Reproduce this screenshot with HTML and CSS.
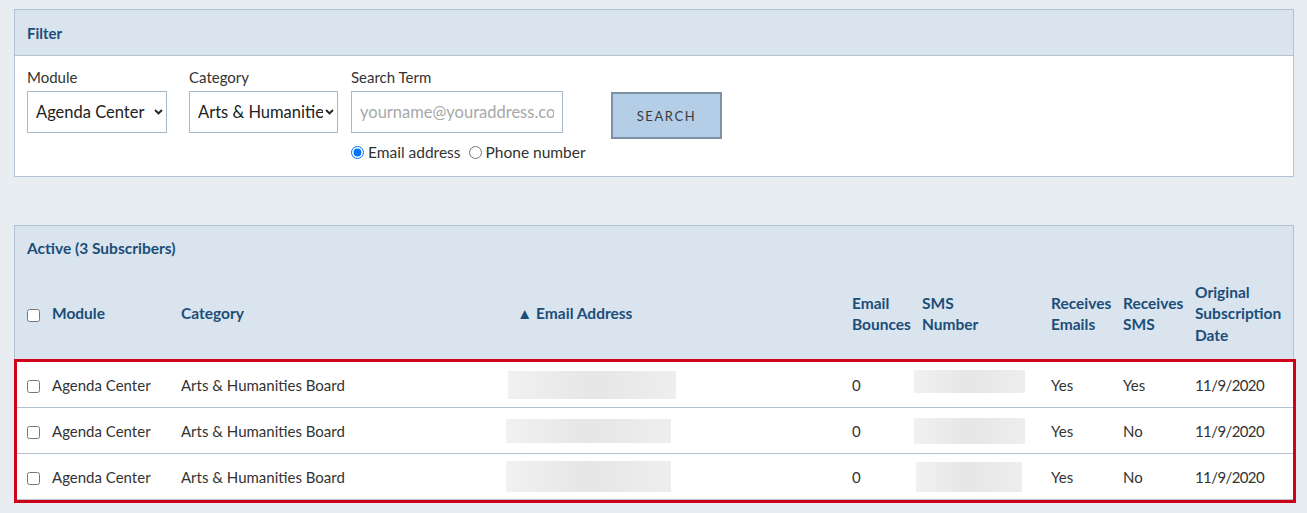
FILE: index.html
```html
<!DOCTYPE html>
<html lang="en">
<head>
<meta charset="utf-8">
<title>Subscribers</title>
<link rel="stylesheet" href="styles.css">
</head>
<body>
<section class="panel filter">
  <div class="panel-head">Filter</div>
  <div class="filter-body">
    <div class="field f-module">
      <label class="lbl">Module</label>
      <div class="select sel-module">
        <select><option>Agenda Center</option></select>
        <svg class="chev" viewBox="0 0 10 7" width="9" height="6"><path d="M1 1.2l4 4 4-4" fill="none" stroke="#222" stroke-width="2.2"/></svg>
      </div>
    </div>
    <div class="field f-cat">
      <label class="lbl">Category</label>
      <div class="select sel-cat">
        <select><option>Arts &amp; Humanities Board</option></select>
        <svg class="chev" viewBox="0 0 10 7" width="9" height="6"><path d="M1 1.2l4 4 4-4" fill="none" stroke="#222" stroke-width="2.2"/></svg>
      </div>
    </div>
    <div class="field f-term">
      <label class="lbl">Search Term</label>
      <input class="term" type="text" placeholder="yourname@youraddress.com">
      <div class="radios">
        <label class="radio"><input type="radio" name="t" checked> Email address</label>
        <label class="radio"><input type="radio" name="t"> Phone number</label>
      </div>
    </div>
    <button class="btn" type="button">SEARCH</button>
  </div>
</section>

<section class="panel active">
  <div class="active-title">Active (3 Subscribers)</div>
  <table class="subs">
    <colgroup>
      <col class="c-chk"><col class="c-mod"><col class="c-cat"><col class="c-email"><col class="c-bounce"><col class="c-sms"><col class="c-re"><col class="c-rs"><col class="c-date">
    </colgroup>
    <thead>
      <tr>
        <th class="chk"><input type="checkbox"></th>
        <th>Module</th>
        <th>Category</th>
        <th class="email-h">&#9650; Email Address</th>
        <th>Email<br>Bounces</th>
        <th>SMS<br>Number</th>
        <th>Receives<br>Emails</th>
        <th>Receives<br>SMS</th>
        <th>Original<br>Subscription<br>Date</th>
      </tr>
    </thead>
    <tbody>
      <tr class="first">
        <td class="chk"><input type="checkbox"></td>
        <td>Agenda Center</td>
        <td>Arts &amp; Humanities Board</td>
        <td><span class="blur e1"></span></td>
        <td>0</td>
        <td><span class="blur s1"></span></td>
        <td>Yes</td>
        <td>Yes</td>
        <td class="date">11/9/2020</td>
      </tr>
      <tr>
        <td class="chk"><input type="checkbox"></td>
        <td>Agenda Center</td>
        <td>Arts &amp; Humanities Board</td>
        <td><span class="blur e2"></span></td>
        <td>0</td>
        <td><span class="blur s2"></span></td>
        <td>Yes</td>
        <td>No</td>
        <td class="date">11/9/2020</td>
      </tr>
      <tr>
        <td class="chk"><input type="checkbox"></td>
        <td>Agenda Center</td>
        <td>Arts &amp; Humanities Board</td>
        <td><span class="blur e3"></span></td>
        <td>0</td>
        <td><span class="blur s3"></span></td>
        <td>Yes</td>
        <td>No</td>
        <td class="date">11/9/2020</td>
      </tr>
    </tbody>
  </table>
  <div class="highlight"></div>
</section>
</body>
</html>
```
FILE: styles.css
```css
* { box-sizing: border-box; }
html, body { min-height: 513px; }
body {
  margin: 0;
  padding: 9px 13px 12px 14px;
  background: #e8edf2;
  font-family: Lato, "Open Sans", "Liberation Sans", sans-serif;
  font-size: 15px;
  color: #333;
}
.panel {
  width: 1280px;
  border: 1px solid #b3c3d6;
  background: #fff;
}
.panel-head {
  height: 46px;
  background: #dae4ef;
  border-bottom: 1px solid #b3c3d6;
  padding-left: 12px;
  display: flex;
  align-items: center;
  font-weight: 700;
  font-size: 15px;
  color: #1c4e78;
}
.filter-body {
  display: flex;
  align-items: flex-start;
  padding: 11px 12px 14px;
}
.field { display: flex; flex-direction: column; flex: none; }
.f-module { margin-right: 22px; }
.f-cat { margin-right: 13px; }
.f-term { width: 212px; margin-right: 48px; }
.lbl {
  display: block;
  height: 20px;
  line-height: 20px;
  font-size: 15px;
  color: #333;
  margin-bottom: 4px;
  white-space: nowrap;
}
.select { position: relative; height: 42px; }
.sel-module { width: 140px; }
.sel-cat { width: 149px; }
.select select {
  appearance: none;
  -webkit-appearance: none;
  width: 100%;
  height: 42px;
  border: 1px solid #a9b8c8;
  border-radius: 0;
  background: #fff;
  font: inherit;
  font-size: 16.5px;
  color: #222;
  padding: 0 14px 0 8px;
  outline: none;
}
.chev { position: absolute; right: 4px; top: 18px; pointer-events: none; }
.term {
  width: 212px;
  height: 42px;
  border: 1px solid #a9b8c8;
  border-radius: 0;
  padding: 0 8px;
  font: inherit;
  font-size: 16.5px;
  outline: none;
}
.term::placeholder { color: #a8a8a8; }
.radios {
  display: flex;
  margin-top: 9px;
  height: 20px;
  align-items: center;
  font-size: 15.5px;
  white-space: nowrap;
}
.radio { display: flex; align-items: center; margin-right: 8px; }
.radio input { margin: 0 4px 0 0; width: 13px; height: 13px; }
.btn {
  flex: none;
  margin-top: 25px;
  width: 111px;
  height: 47px;
  background: #b5cee8;
  border: 2px solid #7c90a6;
  border-radius: 0;
  font-family: inherit;
  font-size: 13px;
  letter-spacing: 1.6px;
  color: #3a3a3a;
  padding: 0;
}
.active {
  position: relative;
  margin-top: 48px;
  background: #dae4ef;
}
.active-title {
  height: 43px;
  padding-left: 12px;
  display: flex;
  align-items: center;
  font-weight: 700;
  font-size: 15.5px;
  color: #1c4e78;
}
.subs {
  width: 1278px;
  table-layout: fixed;
  border-collapse: separate;
  border-spacing: 0;
}
.c-chk { width: 37px; }
.c-mod { width: 129px; }
.c-cat { width: 325px; }
.c-email { width: 346px; }
.c-bounce { width: 70px; }
.c-sms { width: 129px; }
.c-re { width: 72px; }
.c-rs { width: 72px; }
.c-date { width: 98px; }
.subs th {
  text-align: left;
  font-weight: 700;
  font-size: 15.5px;
  line-height: 21.5px;
  color: #1c4e78;
  padding: 11px 0 13px;
  height: 92px;
  vertical-align: middle;
  white-space: nowrap;
}
.subs th.email-h { padding-left: 11px; }
.subs .chk { padding-left: 12px; }
.subs input[type=checkbox] { margin: 0; width: 13px; height: 13px; vertical-align: middle; }
.subs tbody td {
  background: #fff;
  height: 46px;
  border-top: 1px solid #b3c3d6;
  padding: 0;
  vertical-align: middle;
  white-space: nowrap;
}
.subs tbody tr.first td { border-top-color: #fff; }
.subs td.date { letter-spacing: -0.6px; }
.blur {
  display: inline-block;
  vertical-align: middle;
  background: linear-gradient(90deg, #f1f1f1 0%, #e6e6e6 50%, #eeeeee 100%);
}
.e1 { width: 168px; height: 28px; margin-left: 2px; }
.e2 { width: 165px; height: 24px; }
.e3 { width: 165px; height: 31px; }
.s1 { width: 111px; height: 23px; margin-left: -8px; position: relative; top: -3px; }
.s2 { width: 111px; height: 26px; margin-left: -8px; }
.s3 { width: 106px; height: 30px; margin-left: -6px; }
.highlight {
  position: absolute;
  left: -1px;
  right: -3px;
  top: 133px;
  bottom: -4px;
  border: 3px solid #d0021b;
  pointer-events: none;
}
```
